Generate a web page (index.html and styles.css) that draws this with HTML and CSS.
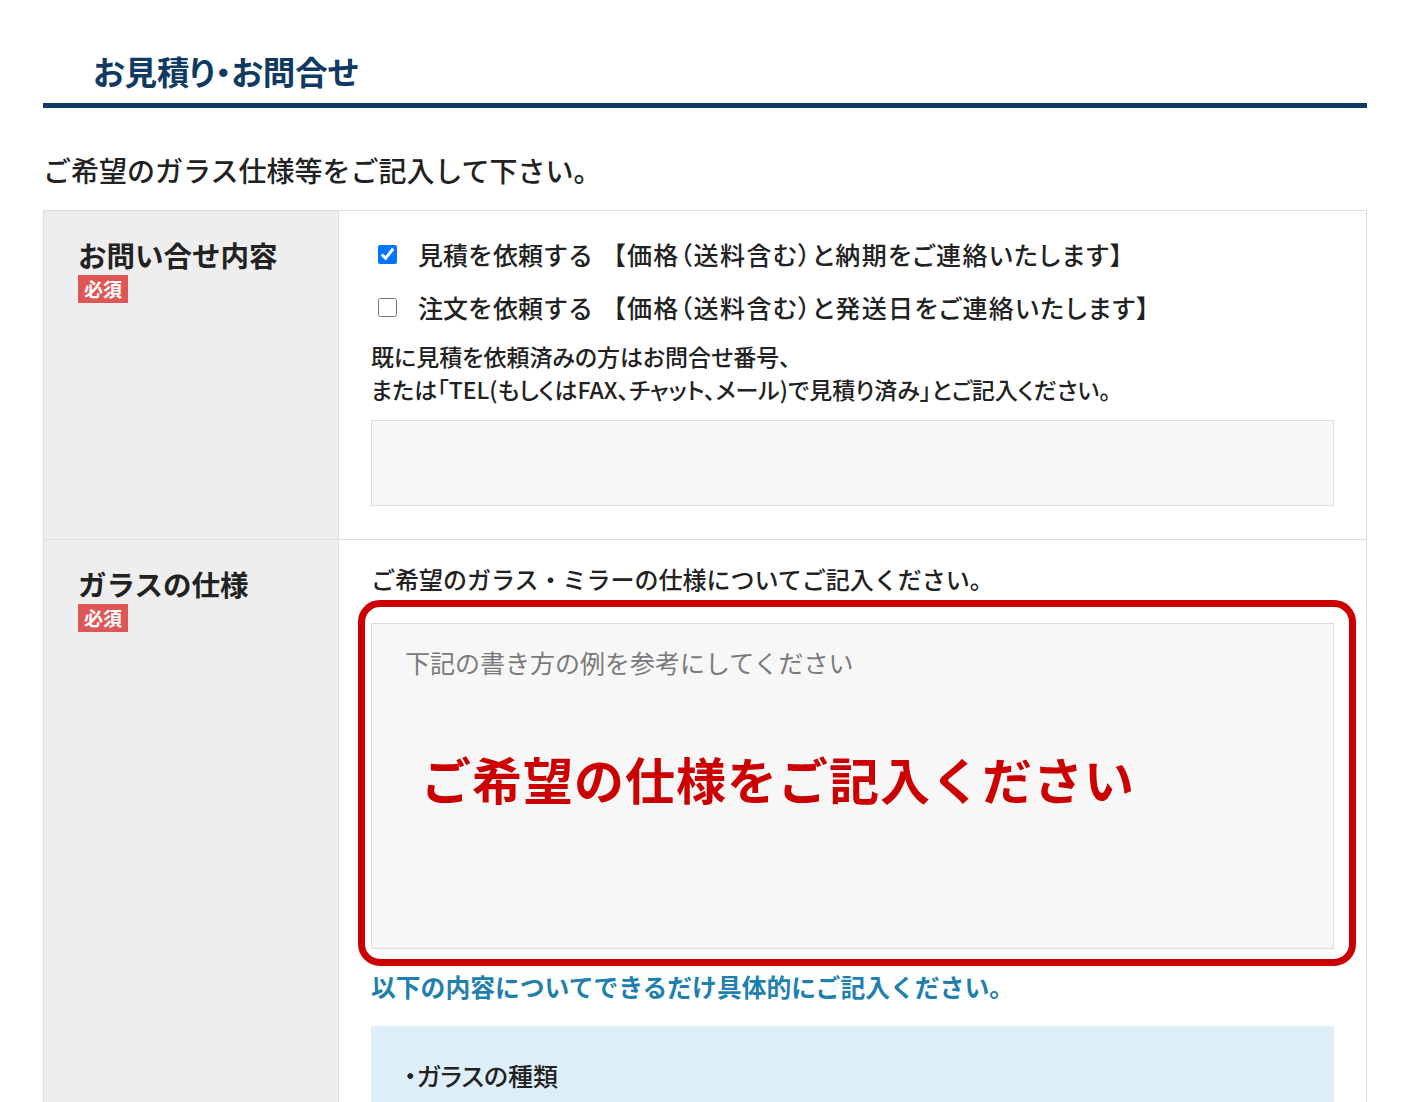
FILE: index.html
```html
<!DOCTYPE html>
<html lang="ja">
<head>
<meta charset="utf-8">
<title>お見積り・お問合せ</title>
<link rel="stylesheet" href="styles.css">
</head>
<body>
<div class="page">
  <h1 class="page-title">お見積り・お問合せ</h1>
  <p class="lead">ご希望のガラス仕様等をご記入して下さい。</p>

  <div class="form-table">
    <div class="row">
      <div class="label-cell">
        <div class="label">お問い合せ内容</div>
        <span class="badge">必須</span>
      </div>
      <div class="field-cell">
        <label class="check-line"><input type="checkbox" checked><span class="check-text">見積を依頼する</span> <span class="check-note">【価格（送料含む）と納期をご連絡いたします】</span></label>
        <label class="check-line"><input type="checkbox"><span class="check-text">注文を依頼する</span> <span class="check-note">【価格（送料含む）と発送日をご連絡いたします】</span></label>
        <p class="note">既に見積を依頼済みの方はお問合せ番号、<br>または「TEL(もしくはFAX、チャット、メール)で見積り済み」とご記入ください。</p>
        <textarea class="input small"></textarea>
      </div>
    </div>

    <div class="row">
      <div class="label-cell">
        <div class="label">ガラスの仕様</div>
        <span class="badge">必須</span>
      </div>
      <div class="field-cell">
        <p class="field-intro">ご希望のガラス・ミラーの仕様についてご記入ください。</p>
        <div class="highlight-wrap">
          <textarea class="input large" placeholder="下記の書き方の例を参考にしてください"></textarea>
          <div class="highlight-frame"></div>
          <div class="highlight-text">ご希望の仕様をご記入ください</div>
        </div>
        <p class="hint">以下の内容についてできるだけ具体的にご記入ください。</p>
        <div class="example-box">
          <p class="example-item">・ガラスの種類</p>
        </div>
      </div>
    </div>
  </div>
</div>
</body>
</html>
```

FILE: styles.css
```css
* { box-sizing: border-box; }
html, body { margin: 0; padding: 0; background: #fff; }
body {
  font-family: "Noto Sans CJK JP", "Noto Sans", sans-serif;
  color: #222;
  overflow: hidden;
  height: 1102px;
}
.page {
  padding: 49px 49px 0 43px;
}
.page-title {
  margin: 0;
  padding: 0 0 10px 50px;
  font-size: 32.5px;
  line-height: 44px;
  font-weight: 700;
  color: #0f3a63;
  border-bottom: 5px solid #0f3a63;
  font-feature-settings: "palt";
}
.lead {
  margin: 42px 0 20px;
  font-size: 28px;
  line-height: 40px;
  font-weight: 500;
  color: #222;
}
.form-table {
  border: 1px solid #ddd;
  border-bottom: 0;
}
.row {
  display: grid;
  grid-template-columns: 295px 1fr;
}
.row + .row { border-top: 1px solid #ddd; }
.label-cell {
  background: #eee;
  border-right: 1px solid #ddd;
  padding: 24px 0 0 34px;
}
.label {
  font-size: 28.5px;
  line-height: 40px;
  font-weight: 700;
  color: #222;
}
.badge {
  display: inline-block;
  background: #de5656;
  color: #fff;
  font-size: 19px;
  line-height: 28px;
  font-weight: 700;
  padding: 0 6px;
}
.field-cell {
  padding: 17px 32px 33px 32px;
}
.row:last-child .field-cell { padding-bottom: 0; }
.check-line {
  display: flex;
  align-items: center;
  font-size: 25px;
  line-height: 53px;
  font-weight: 500;
  color: #222;
  white-space: nowrap;
}
.check-line input {
  width: 19px;
  height: 19px;
  margin: 0 21px 0 7px;
}
.check-note {
  margin-left: 20px;
  font-feature-settings: "palt";
  letter-spacing: 1.4px;
}
.note {
  margin: 6px 0 0;
  font-size: 23px;
  line-height: 33px;
  font-weight: 500;
  font-feature-settings: "palt";
}
.input {
  display: block;
  width: 100%;
  background: #f7f7f7;
  border: 1px solid #ddd;
  resize: none;
  font-family: inherit;
  font-size: 25px;
  line-height: 36px;
  padding: 20px 33px;
  border-radius: 0;
  margin: 0;
}
.input.small { height: 86px; margin-top: 14px; }
.input.large { height: 326px; }
.input::placeholder { color: #7a7a7a; }
.field-intro {
  margin: 5px 0 0;
  font-size: 24px;
  line-height: 34px;
  font-weight: 500;
}
.highlight-wrap {
  position: relative;
  margin-top: 27px;
}
.highlight-frame {
  position: absolute;
  left: -13px;
  right: -22px;
  top: -23px;
  bottom: -17px;
  border: 7px solid #cc0000;
  border-radius: 22px;
  pointer-events: none;
}
.highlight-text {
  position: absolute;
  left: 50px;
  top: 125px;
  font-size: 50px;
  line-height: 60px;
  font-weight: 700;
  color: #cc0000;
  letter-spacing: 1px;
  white-space: nowrap;
}
.hint {
  margin: 19px 0 0;
  font-size: 24.8px;
  line-height: 36px;
  font-weight: 700;
  color: #1f7fae;
}
.example-box {
  margin-top: 22px;
  background: #dfeffa;
  padding: 31px 34px 9px 33px;
}
.example-item {
  margin: 0;
  font-size: 25px;
  line-height: 36px;
  font-weight: 500;
  color: #222;
  font-feature-settings: "palt";
}
```
